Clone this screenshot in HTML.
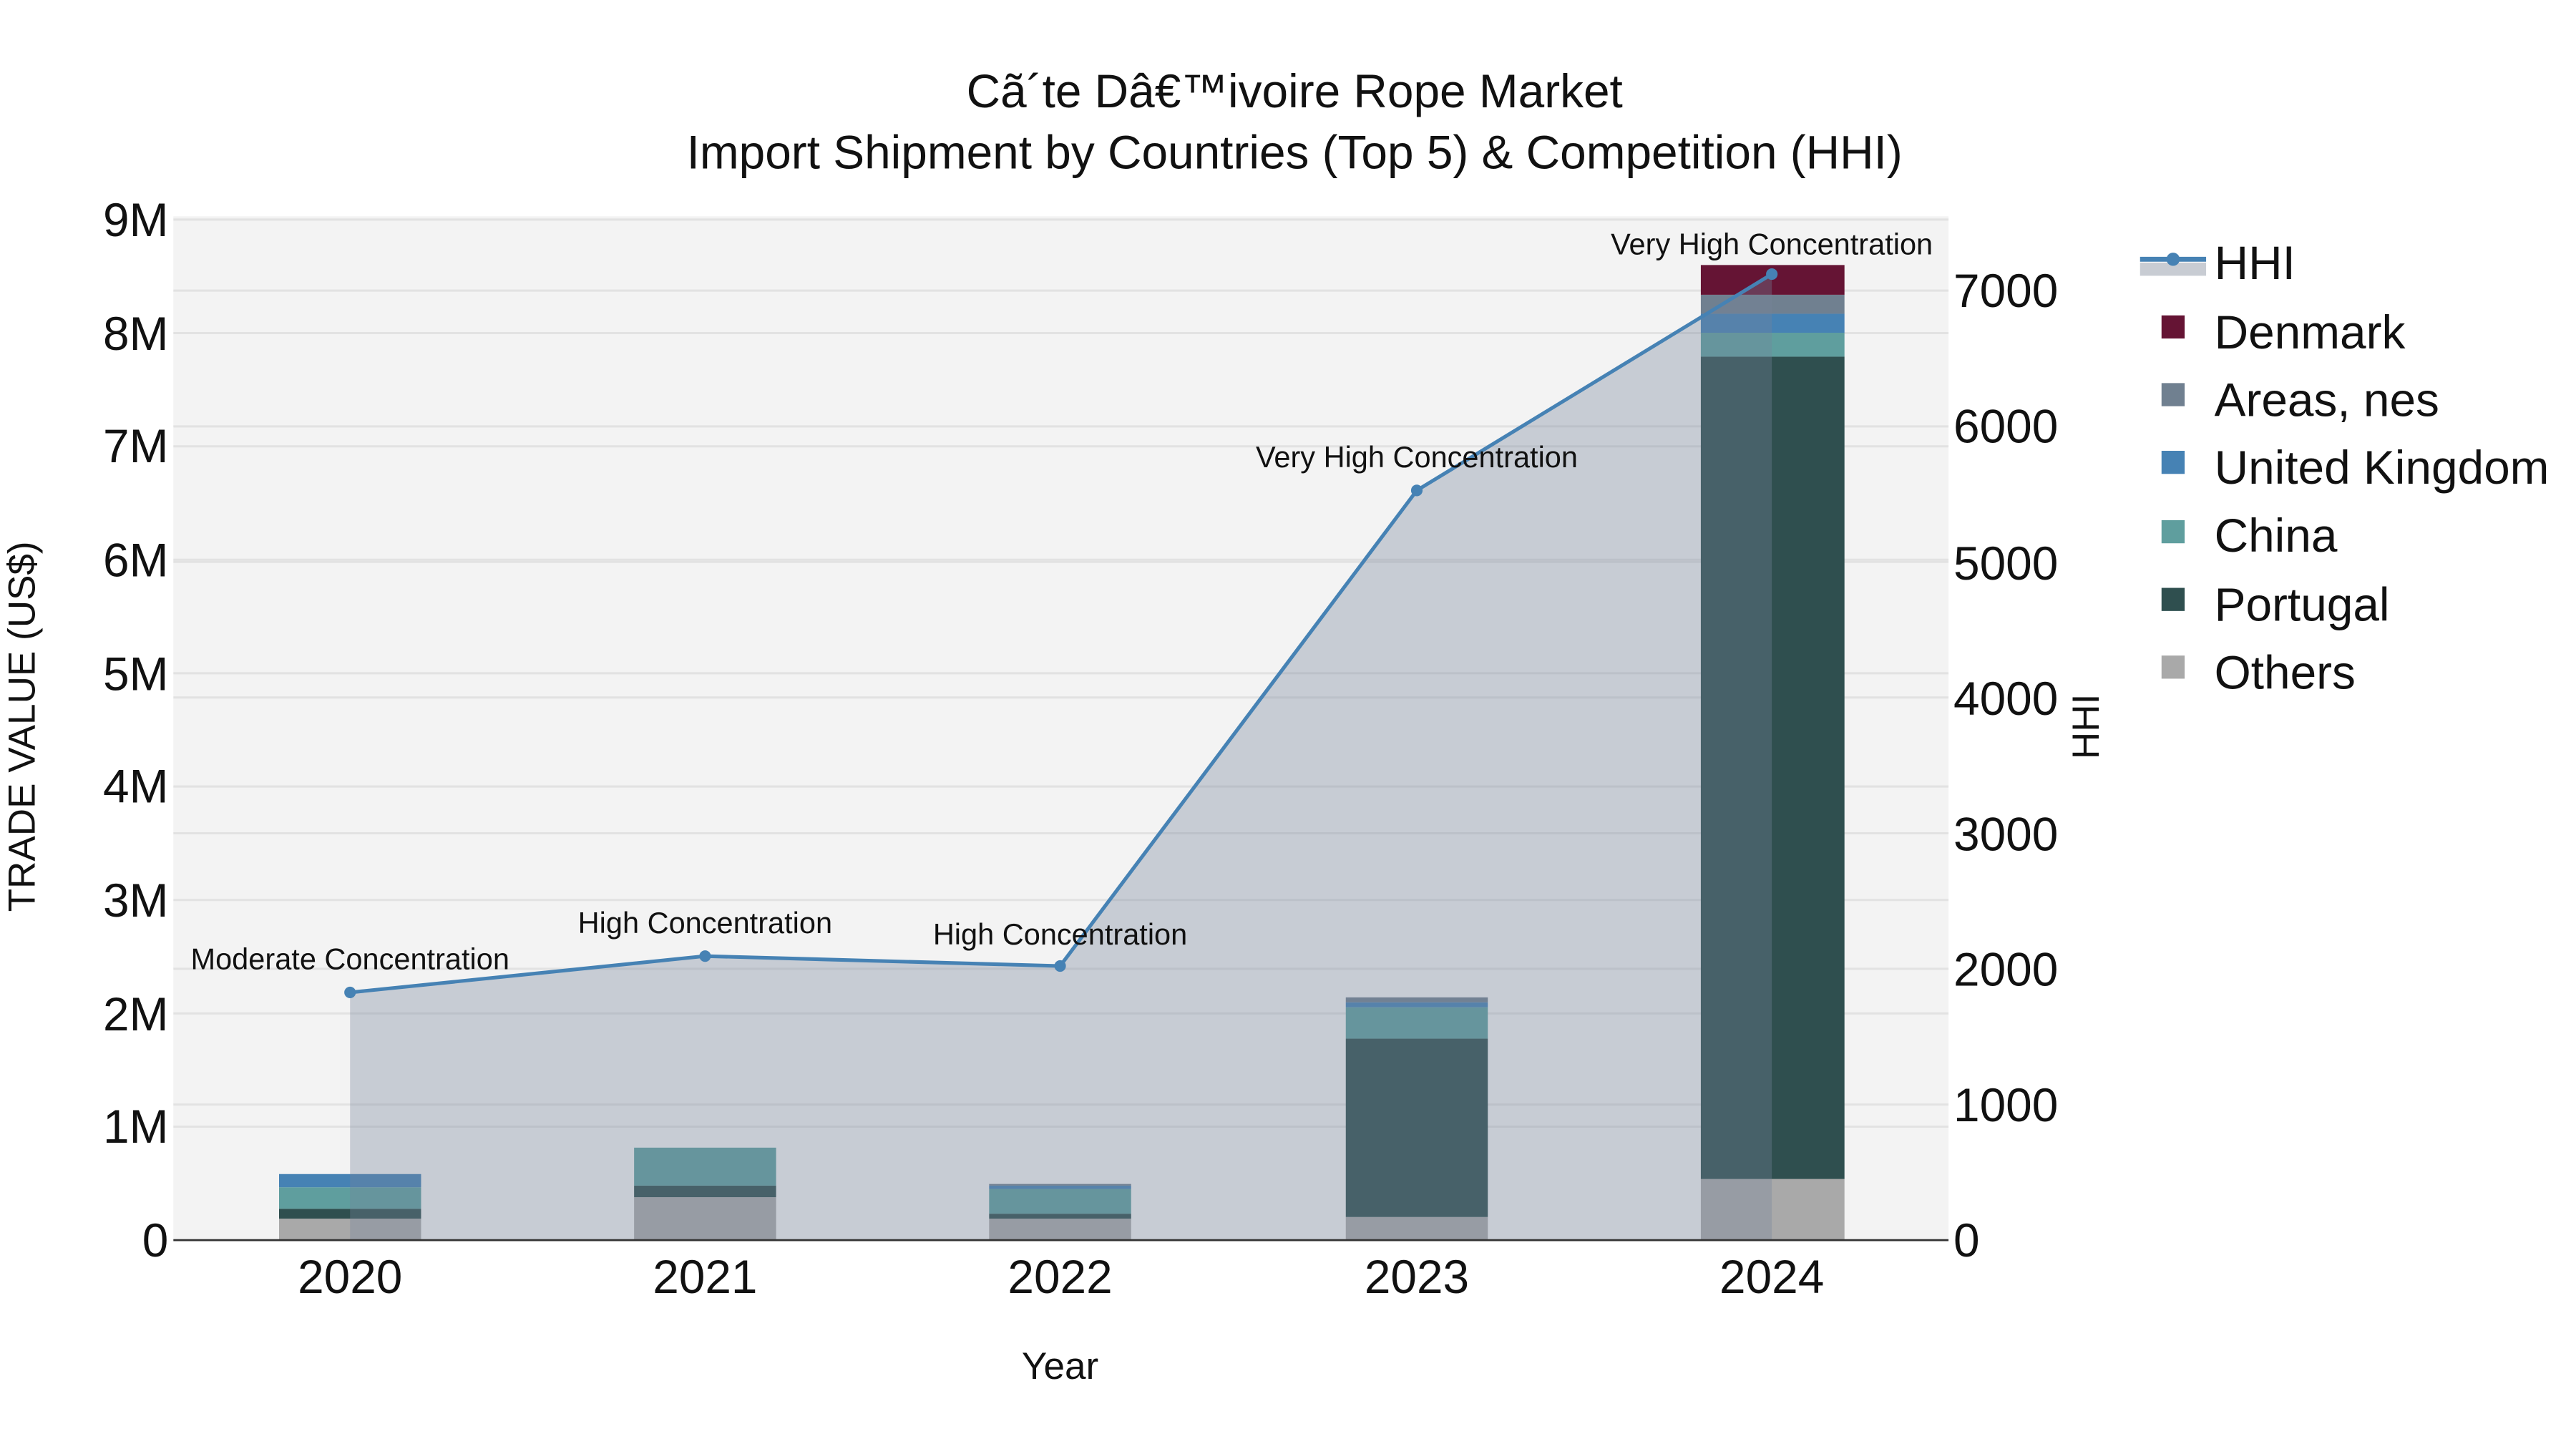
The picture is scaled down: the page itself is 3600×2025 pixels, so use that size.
<!DOCTYPE html>
<html><head><meta charset="utf-8"><style>
html,body{margin:0;padding:0;background:#fff;}
svg{display:block;}
text{font-family:"Liberation Sans",Arial,sans-serif;fill:#111;}
</style></head><body>
<svg width="3600" height="2025" viewBox="0 0 1560 877.5" xmlns="http://www.w3.org/2000/svg">
<rect x="0" y="0" width="1560" height="877.5" fill="#fff"/>
<rect x="105" y="131" width="1075" height="620" fill="#f3f3f3"/>
<g stroke="#e2e2e2" stroke-width="1.3">
<line x1="105" x2="1180" y1="682.3" y2="682.3"/><line x1="105" x2="1180" y1="613.7" y2="613.7"/>
<line x1="105" x2="1180" y1="545" y2="545"/><line x1="105" x2="1180" y1="476.3" y2="476.3"/>
<line x1="105" x2="1180" y1="407.7" y2="407.7"/><line x1="105" x2="1180" y1="339" y2="339"/>
<line x1="105" x2="1180" y1="270.3" y2="270.3"/><line x1="105" x2="1180" y1="201.7" y2="201.7"/>
<line x1="105" x2="1180" y1="133" y2="133"/>
<line x1="105" x2="1180" y1="668.9" y2="668.9"/><line x1="105" x2="1180" y1="586.7" y2="586.7"/>
<line x1="105" x2="1180" y1="504.6" y2="504.6"/><line x1="105" x2="1180" y1="422.4" y2="422.4"/>
<line x1="105" x2="1180" y1="340.3" y2="340.3"/><line x1="105" x2="1180" y1="258.2" y2="258.2"/>
<line x1="105" x2="1180" y1="176" y2="176"/>
</g>
<g>
<rect x="169" y="738" width="86" height="13" fill="#a9a9a9"/>
<rect x="169" y="732" width="86" height="6" fill="#2f4f4f"/>
<rect x="169" y="719" width="86" height="13" fill="#5f9e9e"/>
<rect x="169" y="711" width="86" height="8" fill="#4682b4"/>

<rect x="384" y="725" width="86" height="26" fill="#a9a9a9"/>
<rect x="384" y="718" width="86" height="7" fill="#2f4f4f"/>
<rect x="384" y="695" width="86" height="23" fill="#5f9e9e"/>

<rect x="599" y="738" width="86" height="13" fill="#a9a9a9"/>
<rect x="599" y="735" width="86" height="3" fill="#2f4f4f"/>
<rect x="599" y="720" width="86" height="15" fill="#5f9e9e"/>
<rect x="599" y="718" width="86" height="2" fill="#4682b4"/>
<rect x="599" y="717" width="86" height="1" fill="#708090"/>

<rect x="815" y="737" width="86" height="14" fill="#a9a9a9"/>
<rect x="815" y="629" width="86" height="108" fill="#2f4f4f"/>
<rect x="815" y="610" width="86" height="19" fill="#5f9e9e"/>
<rect x="815" y="607" width="86" height="3" fill="#4682b4"/>
<rect x="815" y="604" width="86" height="3" fill="#708090"/>

<rect x="1030" y="714" width="87" height="37" fill="#a9a9a9"/>
<rect x="1030" y="216" width="87" height="498" fill="#2f4f4f"/>
<rect x="1030" y="201.5" width="87" height="14.5" fill="#5f9e9e"/>
<rect x="1030" y="190" width="87" height="11.5" fill="#4682b4"/>
<rect x="1030" y="178.5" width="87" height="11.5" fill="#708090"/>
<rect x="1030" y="160.5" width="87" height="18" fill="#651434"/>
</g>
<polygon points="212,601 427,579 642,585 858,297 1073,166 1073,751 212,751" fill="rgba(118,132,155,0.35)"/>
<polyline points="212,601 427,579 642,585 858,297 1073,166" fill="none" stroke="#4682b4" stroke-width="2.2"/>
<g fill="#4682b4"><circle cx="212" cy="601" r="3.5"/><circle cx="427" cy="579" r="3.5"/><circle cx="642" cy="585" r="3.5"/><circle cx="858" cy="297" r="3.5"/><circle cx="1073" cy="166" r="3.5"/></g>
<line x1="105" x2="1180" y1="751" y2="751" stroke="#333" stroke-width="1.2"/>
<g font-size="18" text-anchor="middle">
<text x="212" y="587">Moderate Concentration</text>
<text x="427" y="565">High Concentration</text>
<text x="642" y="572">High Concentration</text>
<text x="858" y="283">Very High Concentration</text>
<text x="1073" y="154">Very High Concentration</text>
</g>
<g font-size="28.5" text-anchor="middle">
<text x="784" y="65">Cã´te Dâ€™ivoire Rope Market</text>
<text x="784" y="102">Import Shipment by Countries (Top 5) &amp; Competition (HHI)</text>
</g>
<g font-size="28.5" text-anchor="end">
<text x="102" y="761">0</text><text x="102" y="692">1M</text><text x="102" y="624">2M</text>
<text x="102" y="555">3M</text><text x="102" y="486">4M</text><text x="102" y="418">5M</text>
<text x="102" y="349">6M</text><text x="102" y="280">7M</text><text x="102" y="212">8M</text>
<text x="102" y="143">9M</text>
</g>
<g font-size="28.5" text-anchor="start">
<text x="1183" y="761">0</text><text x="1183" y="679">1000</text><text x="1183" y="597">2000</text>
<text x="1183" y="515">3000</text><text x="1183" y="433">4000</text><text x="1183" y="351">5000</text>
<text x="1183" y="268">6000</text><text x="1183" y="186">7000</text>
</g>
<g font-size="28.5" text-anchor="middle">
<text x="212" y="783">2020</text><text x="427" y="783">2021</text><text x="642" y="783">2022</text>
<text x="858" y="783">2023</text><text x="1073" y="783">2024</text>
</g>
<text x="642" y="835" font-size="23" text-anchor="middle">Year</text>
<text transform="translate(21,440) rotate(-90)" font-size="23" text-anchor="middle">TRADE VALUE (US$)</text>
<text transform="translate(1271,440) rotate(-90)" font-size="23" text-anchor="middle">HHI</text>
<rect x="1296" y="159" width="40" height="8" fill="#c8ccd3"/>
<line x1="1296" x2="1336" y1="157" y2="157" stroke="#4682b4" stroke-width="3"/>
<circle cx="1316" cy="157" r="4" fill="#4682b4"/>
<g font-size="28.5">
<text x="1341" y="169">HHI</text>
<text x="1341" y="211">Denmark</text>
<text x="1341" y="252">Areas, nes</text>
<text x="1341" y="293">United Kingdom</text>
<text x="1341" y="334">China</text>
<text x="1341" y="376">Portugal</text>
<text x="1341" y="417">Others</text>
</g>
<rect x="1309" y="191" width="14" height="14" fill="#651434"/>
<rect x="1309" y="232" width="14" height="14" fill="#708090"/>
<rect x="1309" y="273" width="14" height="14" fill="#4682b4"/>
<rect x="1309" y="315" width="14" height="14" fill="#5f9e9e"/>
<rect x="1309" y="356" width="14" height="14" fill="#2f4f4f"/>
<rect x="1309" y="397" width="14" height="14" fill="#a9a9a9"/>
</svg>
</body></html>
